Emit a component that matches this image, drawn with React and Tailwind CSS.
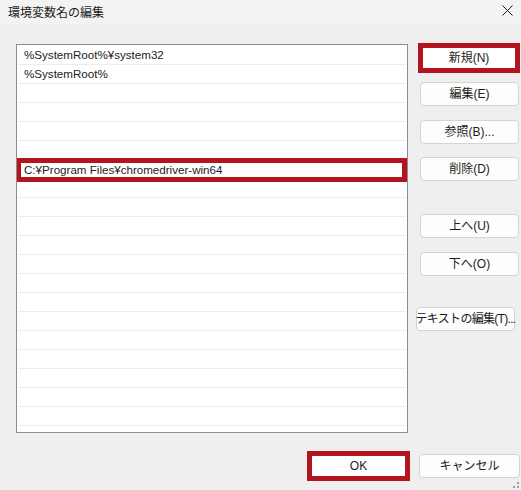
const font = { fontFamily: '"Liberation Sans", "Noto Sans CJK JP", sans-serif' };

const paths = ['%SystemRoot%¥system32', '%SystemRoot%', '', '', '', '', null];

function Btn({ children, className = '' }) {
  return (
    <div
      className={`h-[24px] w-[99px] flex items-center justify-center whitespace-nowrap rounded-[4px] border border-[#d3d3d3] bg-[#fdfdfd] text-[12px] text-[#1b1b1b] ${className}`}
    >
      {children}
    </div>
  );
}

function RedBox({ children, className = '' }) {
  return (
    <div
      className={`flex items-center justify-center border-[5px] border-[#b3141e] bg-white text-[12px] text-[#1b1b1b] ${className}`}
    >
      {children}
    </div>
  );
}

export default function App() {
  const rows = Array.from({ length: 21 }, (_, i) => i);
  return (
    <div className="relative w-[521px] h-[490px] bg-[#efefef] flex flex-col overflow-hidden" style={font}>
      {/* title bar */}
      <div className="h-[25px] bg-[#f3f3f3] flex items-center justify-between pl-[8px] pr-[8px] text-[12px] text-[#1b1b1b]">
        <span>環境変数名の編集</span>
        <svg width="11" height="11" viewBox="0 0 11 11" className="mt-[-4px]">
          <path d="M0.5 0.5 L10.5 10.5 M10.5 0.5 L0.5 10.5" stroke="#1b1b1b" strokeWidth="1" />
        </svg>
      </div>

      <div className="flex pt-[19px]">
        {/* list */}
        <div className="ml-[16px] w-[392px] h-[389px] border border-[#8b8e99] bg-white p-px overflow-hidden">
          {rows.map((i) => (
            <div
              key={i}
              className="relative h-[19px] border-b border-[#ececec] pl-[6px] flex items-center text-[11.6px] text-[#1b1b1b]"
            >
              {i === 6 ? (
                <div className="absolute left-[-2px] right-[-1px] top-[-2px] h-[24px] border-[5px] border-[#b3141e] bg-white flex items-center pl-[3px] z-10">
                  C:¥Program Files¥chromedriver-win64
                </div>
              ) : (
                paths[i] || ''
              )}
            </div>
          ))}
        </div>

        {/* buttons */}
        <div className="ml-[10px] flex flex-col">
          <RedBox className="mt-[-1px] w-[102px] h-[30px]">新規(N)</RedBox>
          <Btn className="ml-[2px] mt-[9px]">編集(E)</Btn>
          <Btn className="ml-[2px] mt-[14px]">参照(B)...</Btn>
          <Btn className="ml-[2px] mt-[13px]">削除(D)</Btn>
          <Btn className="ml-[2px] mt-[33px]">上へ(U)</Btn>
          <Btn className="ml-[2px] mt-[14px]">下へ(O)</Btn>
          <Btn className="ml-[-2px] mt-[31px] tracking-[-0.7px]">テキストの編集(T)...</Btn>
        </div>
      </div>

      {/* footer */}
      <div className="flex mt-[18px]">
        <RedBox className="ml-[307px] w-[103px] h-[30px]">OK</RedBox>
        <Btn className="ml-[9px] mt-[3px] w-[101px]">キャンセル</Btn>
      </div>

      {/* resize grip */}
      <div className="absolute right-[2px] bottom-[2px] grid grid-cols-2 gap-[2px]">
        <span className="w-[2px] h-[2px]" />
        <span className="w-[2px] h-[2px] bg-[#a0a0a0]" />
        <span className="w-[2px] h-[2px] bg-[#a0a0a0]" />
        <span className="w-[2px] h-[2px] bg-[#a0a0a0]" />
      </div>
    </div>
  );
}
